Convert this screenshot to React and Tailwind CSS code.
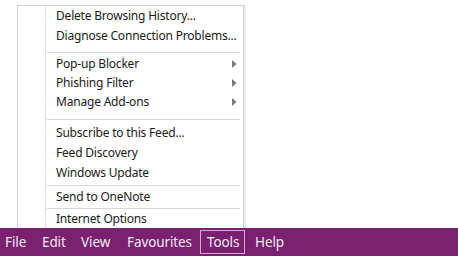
import React from "react";

const Arrow = () => (
  <svg width="5" height="8" viewBox="0 0 5 8" className="mr-[6px]">
    <path d="M0 0 L4.5 4 L0 8 Z" fill="#7a7a7a" />
  </svg>
);

const Item = ({ label, h, sub }) => (
  <div className={`flex items-center justify-between ${h}`}>
    <span className="pl-[10px] tracking-[-0.2px]">{label}</span>
    {sub && <Arrow />}
  </div>
);

const Sep = ({ top, bottom }) => (
  <div className={`${top} ${bottom} h-px bg-[#d7d7d7] ml-[1px] mr-[3px]`} />
);

export default function App() {
  return (
    <div
      className="w-[458px] h-[256px] bg-white flex flex-col overflow-hidden"
      style={{ fontFamily: '"Noto Sans", "Open Sans", sans-serif' }}
    >
      <div className="flex-1 relative">
        <div className="absolute left-[17px] top-[5px] w-[227px] h-[223px] bg-white border border-[#cfcfcf] border-b-0 flex shadow-[2px_0_0_#ececec] text-[12px] text-[#1a1a1a]">
          <div className="w-[28px] border-r border-[#e3e3e3] shrink-0" />
          <div className="flex-1 flex flex-col">
            <Item label="Delete Browsing History..." h="h-[20px]" />
            <Item label="Diagnose Connection Problems..." h="h-[20px]" />
            <Sep top="mt-[6px]" bottom="mb-[1px]" />
            <Item label="Pop-up Blocker" h="h-[19px]" sub />
            <Item label="Phishing Filter" h="h-[19px]" sub />
            <Item label="Manage Add-ons" h="h-[19px]" sub />
            <Sep top="mt-[8px]" bottom="mb-[3px]" />
            <Item label="Subscribe to this Feed..." h="h-[20px]" />
            <Item label="Feed Discovery" h="h-[20px]" />
            <Item label="Windows Update" h="h-[20px]" />
            <Sep top="mt-[2px]" bottom="mb-[1px]" />
            <Item label="Send to OneNote" h="h-[20px]" />
            <Sep top="mt-[1px]" bottom="mb-[1px]" />
            <Item label="Internet Options" h="h-[18px]" />
          </div>
        </div>
      </div>
      <div className="h-[28px] bg-[#79216f] flex items-center text-[13.5px] text-[#f6e8f3] tracking-[-0.1px]">
        <div className="w-[36px] pl-[5px]">File</div>
        <div className="w-[38px] pl-[6px]">Edit</div>
        <div className="w-[46px] pl-[7px]">View</div>
        <div className="w-[80px] pl-[7px]">Favourites</div>
        <div className="w-[45px] h-[24px] border border-[#d9a6d2] pl-[6px] flex items-center">Tools</div>
        <div className="pl-[10px]">Help</div>
      </div>
    </div>
  );
}
